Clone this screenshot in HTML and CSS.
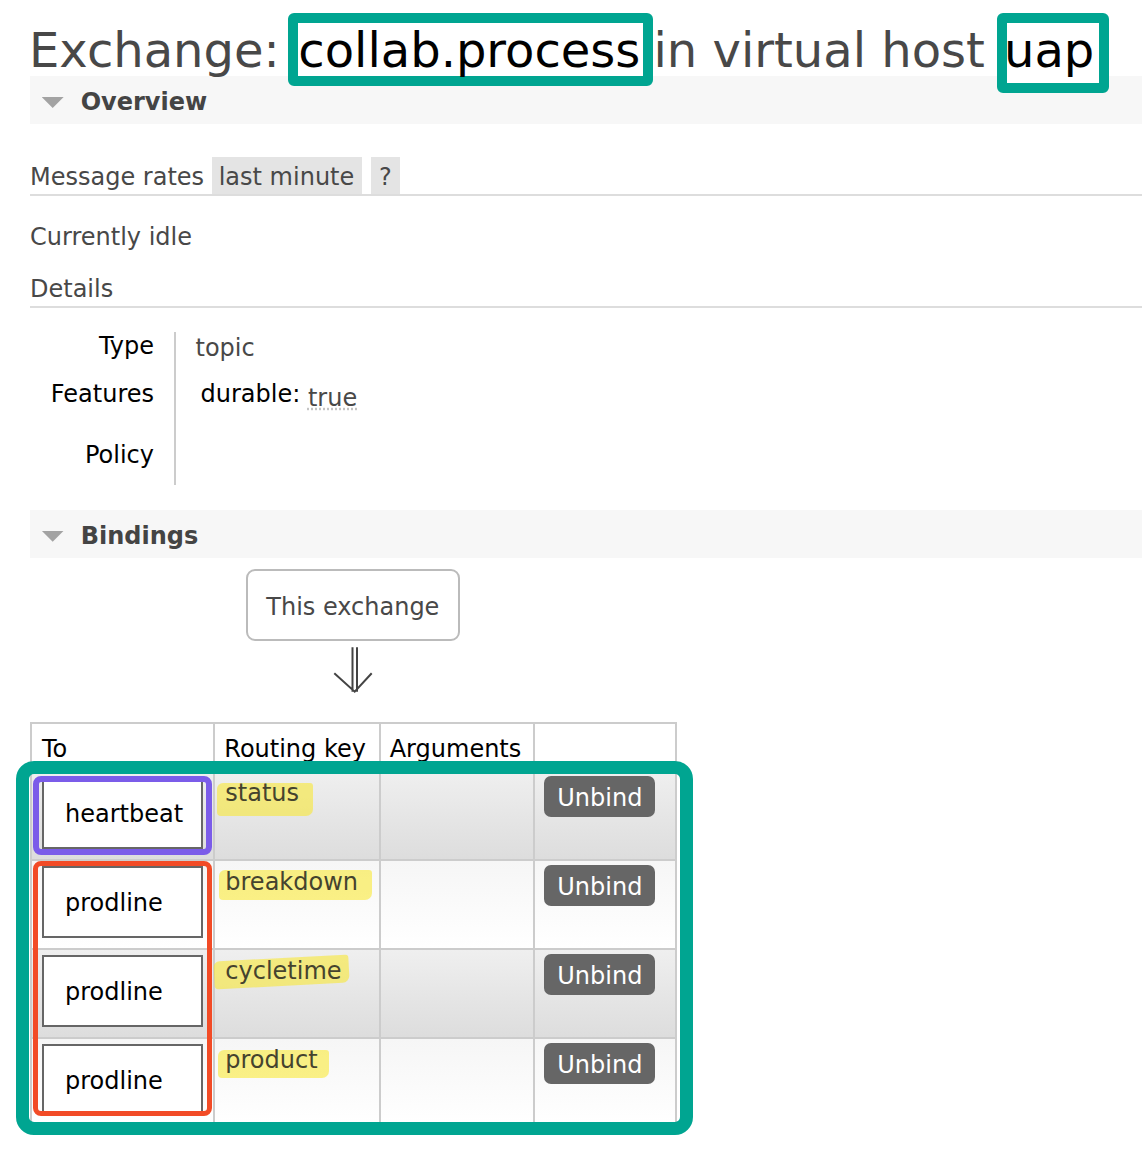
FILE: index.html
```html
<!DOCTYPE html>
<html lang="en">
<head>
<meta charset="utf-8">
<title>Exchange: collab.process</title>
<link rel="stylesheet" href="styles.css">
</head>
<body>
<div class="page">
  <h1 class="title">Exchange:<b class="mark mark-name">collab.process</b><span class="vhost">in virtual host</span><b class="mark mark-vhost">uap</b></h1>

  <section class="section">
    <h2 class="bar"><span class="tri"></span>Overview</h2>
    <h3 class="rates">Message rates <span class="pill">last minute</span> <span class="pill help">?</span></h3>
    <p class="idle">Currently idle</p>
    <h3 class="sub">Details</h3>
    <div class="facts">
      <div class="fact-label">Type</div>
      <div class="fact-value">topic</div>
      <div class="fact-label">Features</div>
      <div class="fact-value fact-feat"><span class="feat-key">durable:</span> <span class="feat-val">true</span></div>
      <div class="fact-label">Policy</div>
      <div class="fact-value"></div>
    </div>
  </section>

  <section class="section bindings">
    <h2 class="bar"><span class="tri"></span>Bindings</h2>
    <div class="this-ex">This exchange</div>
    <svg class="arrow" width="40" height="50" viewBox="0 0 40 50" aria-hidden="true">
      <path d="M19.5 2.3V46.7M24 2.3V46.7M1.3 28.3L21.7 46.7L38.7 28.3" fill="none" stroke="#444" stroke-width="2"/>
    </svg>
    <div class="bind-table">
      <table class="list">
        <thead>
          <tr><th class="c-to">To</th><th class="c-key">Routing key</th><th class="c-args">Arguments</th><th class="c-act"></th></tr>
        </thead>
        <tbody>
          <tr class="alt1">
            <td class="to"><div class="dest">heartbeat</div></td>
            <td class="key"><span class="hl hl-status">status</span></td>
            <td></td>
            <td class="act"><span class="btn">Unbind</span></td>
          </tr>
          <tr class="alt2">
            <td class="to"><div class="dest">prodline</div></td>
            <td class="key"><span class="hl hl-breakdown">breakdown</span></td>
            <td></td>
            <td class="act"><span class="btn">Unbind</span></td>
          </tr>
          <tr class="alt1">
            <td class="to"><div class="dest">prodline</div></td>
            <td class="key"><span class="hl hl-cycletime">cycletime</span></td>
            <td></td>
            <td class="act"><span class="btn">Unbind</span></td>
          </tr>
          <tr class="alt2">
            <td class="to"><div class="dest">prodline</div></td>
            <td class="key"><span class="hl hl-product">product</span></td>
            <td></td>
            <td class="act"><span class="btn">Unbind</span></td>
          </tr>
        </tbody>
      </table>
      <div class="ann ann-teal"></div>
      <div class="ann ann-purple"></div>
      <div class="ann ann-red"></div>
    </div>
  </section>
</div>
</body>
</html>
```

FILE: styles.css
```css
* { box-sizing: border-box; }

html, body {
  margin: 0;
  background: #fff;
}

body {
  width: 1142px;
  font-family: "DejaVu Sans", Verdana, sans-serif;
  font-size: 24px;
  color: #484848;
}

.page {
  padding-left: 30px;
}

/* ---------- Title ---------- */
.title {
  margin: 0 0 0 -1px;
  padding-top: 25px;
  font-size: 48px;
  line-height: 51px;
  font-weight: normal;
  color: #484848;
  white-space: nowrap;
}

.mark {
  position: relative;
  z-index: 1;
  font-weight: normal;
  color: #000;
}

.mark::before {
  content: "";
  position: absolute;
  z-index: -1;
  background: #fff;
  border: 10px solid #00a591;
  border-radius: 6px;
}

.mark-name { margin-left: 18.6px; }
.mark-name::before { left: -10.5px; right: -12.2px; top: -8.6px; bottom: -8.1px; }

.vhost { margin-left: 13.2px; }

.mark-vhost { margin-left: 19.1px; }
.mark-vhost::before { left: -7.2px; right: -15.2px; top: -9.3px; bottom: -14.9px; }

/* ---------- Section bars ---------- */
.bar {
  display: flex;
  align-items: center;
  height: 48px;
  margin: 0;
  padding-top: 4px;
  background: #f7f7f7;
  font-size: 24px;
  font-weight: bold;
  line-height: 44px;
  color: #444;
}

.tri {
  flex: none;
  width: 22px;
  height: 11px;
  margin: 1px 17px 0 11.7px;
  background: #a3a3a3;
  clip-path: polygon(0 0, 100% 0, 50% 100%);
}

/* ---------- Overview ---------- */
.rates {
  margin: 33px 0 0;
  font-size: 24px;
  font-weight: normal;
  line-height: 33px;
  border-bottom: 2px solid #ddd;
  white-space: nowrap;
}

.pill {
  display: inline-block;
  padding: 4px 8px 0 7px;
  background: #e4e4e4;
  line-height: 33px;
}

.pill.help {
  margin-left: 1px;
  padding: 4px 8px 0;
}

.idle {
  margin: 27px 0 0;
  line-height: 28px;
}

.sub {
  margin: 22px 0 0;
  padding: 2px 0 3px;
  font-size: 24px;
  font-weight: normal;
  line-height: 28px;
  border-bottom: 2px solid #ddd;
}

.facts {
  display: grid;
  grid-template-columns: 143.5px 1fr;
  grid-template-rows: 48px 60.7px 44.3px;
  margin-top: 24.4px;
}

.fact-label {
  padding: 2px 19.5px 0 0;
  text-align: right;
  line-height: 24px;
  color: #000;
}

.fact-value {
  border-left: 2px solid #ccc;
  padding: 2px 0 0 20px;
  line-height: 28px;
}

.fact-feat { line-height: 24px; }

.feat-key {
  margin-left: 5px;
  color: #000;
}

.feat-val {
  vertical-align: -4px;
  text-decoration: underline dotted #c4c4c4;
  text-underline-offset: 2px;
}

/* ---------- Bindings ---------- */
.bindings { margin-top: 24.3px; }

.this-ex {
  width: 214.3px;
  margin: 11.3px 0 0 215.7px;
  padding-top: 5px;
  border: 2px solid #bbb;
  border-radius: 9px;
  text-align: center;
  line-height: 62.7px;
  color: #484848;
}

.arrow {
  display: block;
  margin: 4px 0 0 303px;
}

.bind-table {
  position: relative;
  width: 647.3px;
  margin: 27.7px 0 20px;
}

.list {
  width: 647.3px;
  table-layout: fixed;
  border-collapse: separate;
  border-spacing: 0;
  border-top: 2px solid #ccc;
  border-left: 2px solid #ccc;
  font-size: 24px;
}

.list th,
.list td {
  border-right: 2px solid #ccc;
  border-bottom: 2px solid #ccc;
  vertical-align: top;
  line-height: 28px;
}

.list th {
  padding: 11px 9px 7px;
  text-align: left;
  font-weight: normal;
  color: #000;
  background: #fff;
}

.list th.c-to { padding-left: 10px; width: 183.3px; }
.list th.c-key { width: 165.4px; }
.list th.c-args { width: 154.6px; }
.list th.c-act { width: 142px; }

.list td { padding: 0; }

.alt1 td { background: linear-gradient(#efefef, #dddddd); }
.alt2 td { background: linear-gradient(#f6f6f6, #ffffff); }

.list td.to { padding: 5px 10px 10px 10px; }

.dest {
  height: 72px;
  padding: 21px 0 0 21px;
  border: 2px solid #666;
  background: #fff;
  color: #000;
  white-space: nowrap;
}

.list td.key { padding: 7px 10px 1px; }

.hl {
  position: relative;
  z-index: 0;
  color: #45432e;
}

.hl::before {
  content: "";
  position: absolute;
  z-index: -1;
  background: rgba(250, 231, 37, 0.55);
  border-radius: 6px 3px 7px 4px;
}

.hl-status::before { left: -8.7px; right: -14.1px; top: 3.3px; bottom: -8.7px; }
.hl-breakdown::before { left: -6px; right: -13.6px; top: 1.3px; bottom: -3.3px; }
.hl-cycletime::before { left: -11px; right: -7.6px; top: 1px; bottom: -1px; transform: rotate(-3deg); }
.hl-product::before { left: -7.8px; right: -10.9px; top: 3.3px; bottom: -3.6px; }

.list td.act { padding: 3.3px 9px; }

.btn {
  display: block;
  width: fit-content;
  height: 41px;
  padding: 3px 13px 0;
  border-radius: 7px;
  background: #666;
  color: #fff;
  line-height: 38px;
}

/* ---------- Annotation frames ---------- */
.ann {
  position: absolute;
  pointer-events: none;
}

.ann-teal {
  left: -14.3px;
  top: 39px;
  width: 677.3px;
  height: 373.3px;
  border: 13.5px solid #00a591;
  border-radius: 18px;
}

.ann-purple {
  left: 3.3px;
  top: 53.3px;
  width: 178.4px;
  height: 79px;
  border: 6px solid #7b5ce9;
  border-radius: 8px;
}

.ann-red {
  left: 3.3px;
  top: 139px;
  width: 178.4px;
  height: 255px;
  border: 5.5px solid #f24b26;
  border-radius: 8px;
}
```
